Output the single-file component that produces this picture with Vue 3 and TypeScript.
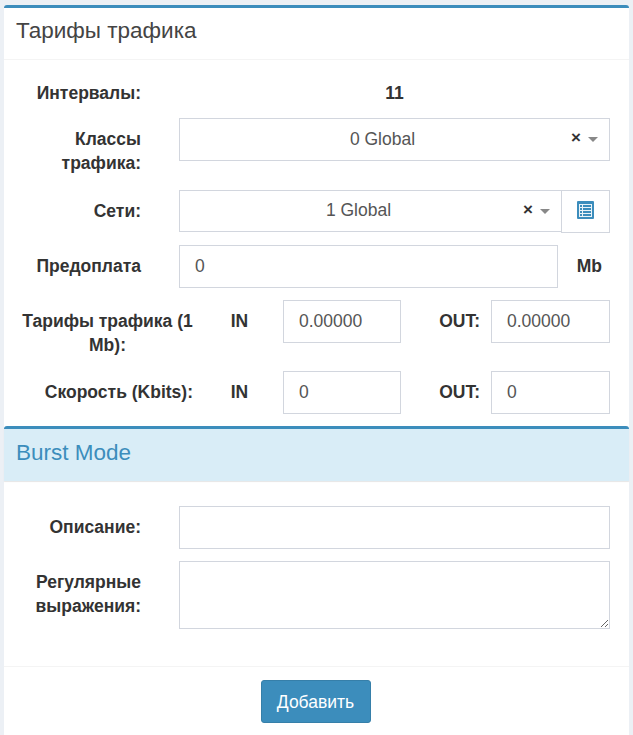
<script setup lang="ts">
const dashes: number[] = [0, 1, 2, 3]
</script>

<template>
  <div class="box">
    <div class="head"><h3>Тарифы трафика</h3></div>
    <div class="body">
      <div class="row r-int">
        <div class="lab">Интервалы:</div>
        <div class="val">11</div>
      </div>
      <div class="row r-cls">
        <div class="lab">Классы<br />трафика:</div>
        <div class="select wide">
          <span class="sel-text">0 Global</span>
          <span class="clear">×</span><i class="caret"></i>
        </div>
      </div>
      <div class="row r-net">
        <div class="lab">Сети:</div>
        <div class="group">
          <div class="select net">
            <span class="sel-text">1 Global</span>
            <span class="clear">×</span><i class="caret"></i>
          </div>
          <div class="addon">
            <svg width="17" height="18" viewBox="0 0 17 18">
              <rect width="17" height="18" rx="1" fill="#3c8dbc" />
              <rect x="2" y="3" width="13" height="13" fill="#eaf3f8" />
              <g v-for="d in dashes" :key="d">
                <rect x="3" :y="4 + d * 3" width="2" height="2" fill="#3c8dbc" />
                <rect x="6" :y="4 + d * 3" width="8" height="2" fill="#3c8dbc" />
              </g>
            </svg>
          </div>
        </div>
      </div>
      <div class="row r-pre">
        <div class="lab">Предоплата</div>
        <input class="input pre" value="0" />
        <div class="mb">Mb</div>
      </div>
      <div class="row r-tar">
        <div class="lab wide-lab">Тарифы трафика (1<br />Mb):</div>
        <div class="io">IN</div>
        <input class="input num" value="0.00000" />
        <div class="io out">OUT:</div>
        <input class="input num last" value="0.00000" />
      </div>
      <div class="row r-spd">
        <div class="lab wide-lab">Скорость (Kbits):</div>
        <div class="io">IN</div>
        <input class="input num" value="0" />
        <div class="io out">OUT:</div>
        <input class="input num last" value="0" />
      </div>
    </div>
    <div class="sub"><h3>Burst Mode</h3></div>
    <div class="body burst">
      <div class="row r-desc">
        <div class="lab">Описание:</div>
        <input class="input grow" />
      </div>
      <div class="row">
        <div class="lab">Регулярные<br />выражения:</div>
        <textarea class="input grow area"></textarea>
      </div>
    </div>
    <div class="foot"><button class="btn">Добавить</button></div>
  </div>
</template>

<style>
html, body { margin: 0; background: #ecf0f5; }
</style>

<style scoped>
.box {
  box-sizing: border-box;
  width: 625px;
  height: 730px;
  margin: 5px 0 0 4px;
  background: #fff;
  border-top: 3px solid #3c8dbc;
  border-radius: 3px 3px 0 0;
  font-family: "Liberation Sans", Arial, sans-serif;
  font-size: 17.5px;
  line-height: 24px;
  color: #333;
}
.head { box-sizing: border-box; height: 52px; border-bottom: 1px solid #f4f4f4; padding: 0 12px 6px; display: flex; align-items: center; }
h3 { margin: 0; font-size: 22.5px; font-weight: 400; line-height: 26px; color: #444; }
.body { padding: 0 19px 0 0; box-sizing: border-box; }
.row { display: flex; align-items: flex-start; }
.lab { width: 137px; flex: none; text-align: right; font-weight: 700; padding-top: 9px; color: #333; }
.wide-lab { width: 189px; box-sizing: border-box; white-space: nowrap; }
.r-tar .wide-lab { padding-left: 18px; text-align: center; }
.r-int { height: 58px; }
.r-int .lab { padding-top: 21px; }
.val { flex: 1; margin-left: 38px; font-weight: 700; text-align: center; padding-top: 21px; }
.r-cls { height: 72px; }
.r-net { height: 55px; }
.r-pre { height: 55px; }
.r-tar { height: 71px; }
.r-spd { height: 55px; }
.select, .input, .addon {
  box-sizing: border-box;
  height: 43px;
  border: 1px solid #d2d6de;
  background: #fff;
  color: #555;
}
.select { position: relative; display: flex; align-items: center; }
.wide { flex: 1; margin-left: 38px; }
.group { flex: 1; margin-left: 38px; display: flex; }
.net { flex: 1; height: 42px; border-right: none; }
.sel-text { flex: 1; text-align: center; padding-right: 24px; padding-bottom: 2px; }
.clear { position: absolute; right: 28px; top: 7px; font-weight: 700; font-size: 17px; color: #333; }
.caret { position: absolute; right: 11px; top: 18px; width: 0; height: 0; border: 5px solid transparent; border-top-color: #888; border-bottom: 0; }
.addon { width: 49px; display: flex; align-items: center; justify-content: center; padding-bottom: 3px; }
.input { display: block; font: inherit; padding: 0 15px; outline: none; border-radius: 0; }
.pre { width: 379px; margin-left: 38px; }
.mb { flex: 1; text-align: right; font-weight: 700; padding-top: 9px; padding-right: 8px; }
.io { width: 90px; flex: none; box-sizing: border-box; font-weight: 700; padding-top: 9px; padding-left: 3px; text-align: center; }
.io.out { text-align: right; padding-left: 0; padding-right: 11px; }
.num { width: 118px; flex: none; }
.num.last { width: 119px; }
.sub { height: 52px; background: #d9edf7; border-top: 3px solid #3c8dbc; border-radius: 3px 3px 0 0; box-shadow: 0 1px 1px rgba(0,0,0,.1); padding: 0 12px; display: flex; align-items: center; }
.sub h3 { color: #3c8dbc; padding-bottom: 5px; }
.burst { padding-top: 25px; height: 185px; }
.r-desc { margin-bottom: 12px; }
.grow { flex: 1; margin-left: 38px; }
.area { height: 68px; resize: vertical; }
.foot { border-top: 1px solid #f4f4f4; padding: 13px 2px 0 0; text-align: center; }
.btn { width: 110px; height: 43px; box-sizing: border-box; background: #3c8dbc; border: 1px solid #367fa9; border-radius: 3px; color: #fff; font: inherit; }
</style>
